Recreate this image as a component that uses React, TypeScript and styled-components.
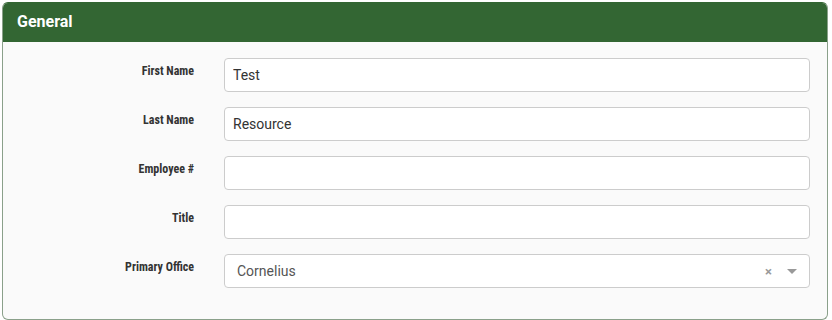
import React from "react";
import styled, { createGlobalStyle } from "styled-components";

const Global = createGlobalStyle`
  html, body { margin: 0; padding: 0; background: #ffffff; }
  body { font-family: Roboto, "Noto Sans", sans-serif; color: #333; }
  * { box-sizing: border-box; }
`;

const Page = styled.div`
  padding: 2px 4px 0 2px;
`;

const Panel = styled.section`
  border: 1px solid #336633;
  border-color: #336633 #8aa08a #8aa08a #8aa08a;
  border-radius: 6px;
  background: #fafafa;
  overflow: hidden;
  height: 318px;
`;

const Header = styled.div`
  background: #336633;
  color: #ffffff;
  height: 39px;
  display: flex;
  align-items: center;
  padding: 0 0 2px 14px;
  font-size: 16px;
  font-weight: 700;
`;

const Body = styled.div`
  padding: 16px 17px 16px 0;
  display: grid;
  grid-template-columns: 191px 1fr;
  column-gap: 30px;
  row-gap: 15px;
  align-items: start;
`;

const Label = styled.label`
  text-align: right;
  font-size: 12px;
  font-weight: 700;
  font-stretch: condensed;
  color: #333;
  padding-top: 6px;
`;

const Input = styled.input`
  height: 34px;
  width: 100%;
  border: 1px solid #cccccc;
  border-radius: 4px;
  background: #ffffff;
  padding: 0 8px;
  font-family: Roboto, "Noto Sans", sans-serif;
  font-size: 14px;
  color: #333;
  outline: none;
`;

const Select = styled.div`
  height: 34px;
  border: 1px solid #cccccc;
  border-radius: 4px;
  background: #ffffff;
  display: flex;
  align-items: center;
  padding: 0 12px 0 12px;
  font-size: 14px;
  color: #555;
`;

const SelectValue = styled.span`
  flex: 1;
`;

const Clear = styled.span`
  font-size: 13px;
  font-weight: 700;
  color: #999;
  margin-right: 15px;
  line-height: 1;
`;

const Arrow = styled.span`
  width: 0;
  height: 0;
  border-left: 5px solid transparent;
  border-right: 5px solid transparent;
  border-top: 5px solid #999;
  margin-top: 1px;
`;

const fields = [
  { label: "First Name", value: "Test" },
  { label: "Last Name", value: "Resource" },
  { label: "Employee #", value: "" },
  { label: "Title", value: "" },
];

export default function App() {
  return (
    <>
      <Global />
      <Page>
        <Panel>
          <Header>General</Header>
          <Body>
            {fields.map((f) => (
              <React.Fragment key={f.label}>
                <Label>{f.label}</Label>
                <Input defaultValue={f.value} />
              </React.Fragment>
            ))}
            <Label>Primary Office</Label>
            <Select>
              <SelectValue>Cornelius</SelectValue>
              <Clear>×</Clear>
              <Arrow />
            </Select>
          </Body>
        </Panel>
      </Page>
    </>
  );
}
